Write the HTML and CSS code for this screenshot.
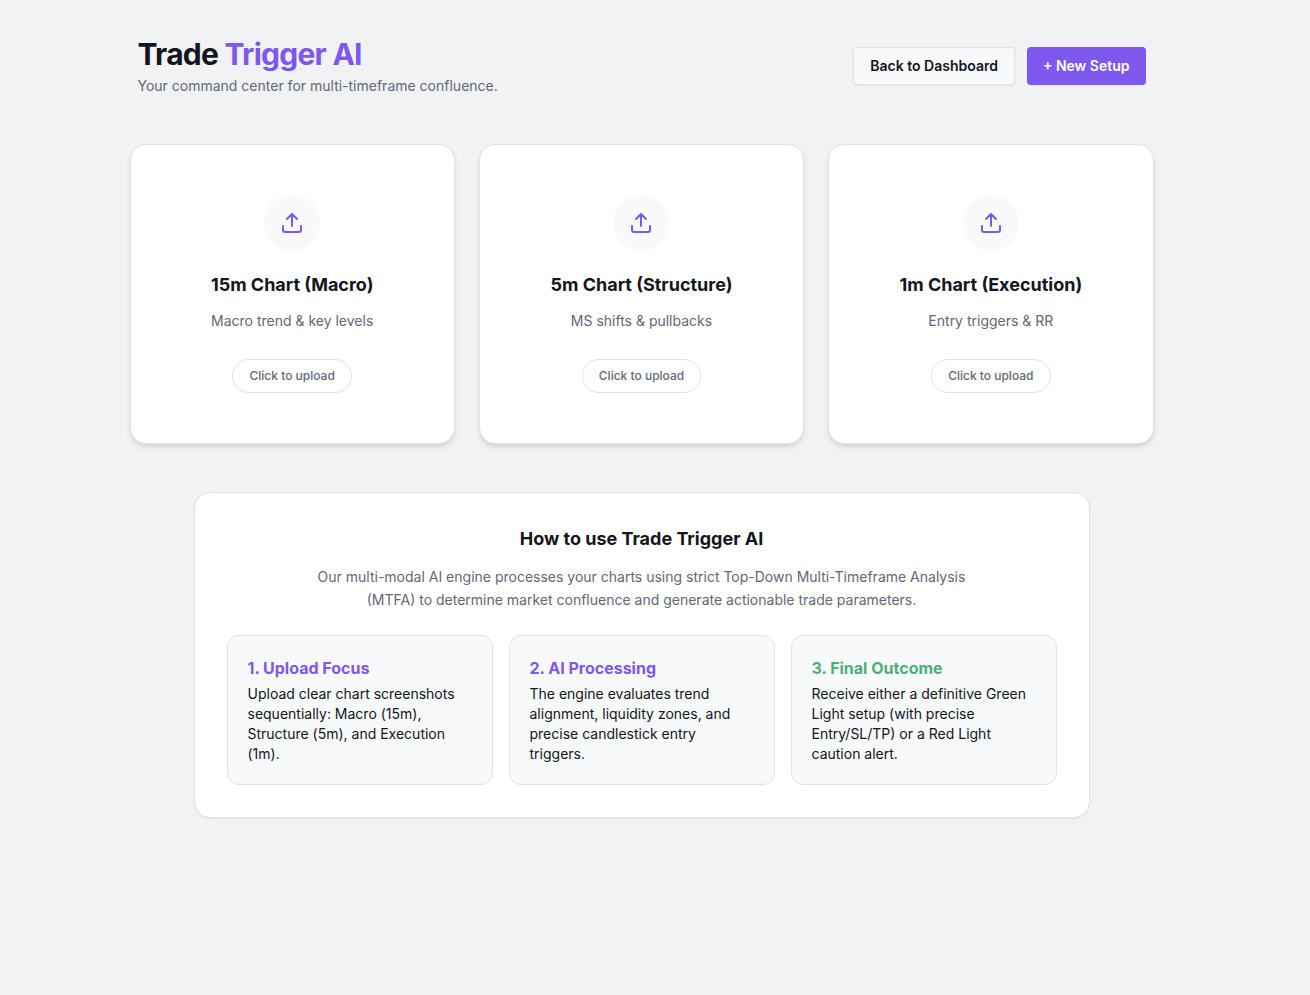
FILE: index.html
```
<!DOCTYPE html>
<html lang="en">
<head>
    <meta charset="UTF-8">
    <meta name="viewport" content="width=device-width, initial-scale=1.0">
    <title>Trade Trigger AI</title>
    <link rel="stylesheet" href="styles.css">
</head>
<body>
    <div class="container">
        <header class="page-header">
            <div>
                <h1>Trade <span>Trigger AI</span></h1>
                <p>Your command center for multi-timeframe confluence.</p>
            </div>
            <div class="actions">
                <button type="button" class="btn">Back to Dashboard</button>
                <button type="button" class="btn btn-primary">+ New Setup</button>
            </div>
        </header>

        <main>
            <section class="uploads">
                <div class="upload-card">
                    <div class="upload-icon">
                        <svg viewBox="0 0 24 24" aria-hidden="true"><path d="M21 15v4a2 2 0 0 1-2 2H5a2 2 0 0 1-2-2v-4M17 8l-5-5-5 5M12 3v12"/></svg>
                    </div>
                    <h2>15m Chart (Macro)</h2>
                    <p>Macro trend &amp; key levels</p>
                    <button type="button" class="upload-btn">Click to upload</button>
                </div>
                <div class="upload-card">
                    <div class="upload-icon">
                        <svg viewBox="0 0 24 24" aria-hidden="true"><path d="M21 15v4a2 2 0 0 1-2 2H5a2 2 0 0 1-2-2v-4M17 8l-5-5-5 5M12 3v12"/></svg>
                    </div>
                    <h2>5m Chart (Structure)</h2>
                    <p>MS shifts &amp; pullbacks</p>
                    <button type="button" class="upload-btn">Click to upload</button>
                </div>
                <div class="upload-card">
                    <div class="upload-icon">
                        <svg viewBox="0 0 24 24" aria-hidden="true"><path d="M21 15v4a2 2 0 0 1-2 2H5a2 2 0 0 1-2-2v-4M17 8l-5-5-5 5M12 3v12"/></svg>
                    </div>
                    <h2>1m Chart (Execution)</h2>
                    <p>Entry triggers &amp; RR</p>
                    <button type="button" class="upload-btn">Click to upload</button>
                </div>
            </section>

            <section class="guide">
                <h2>How to use Trade Trigger AI</h2>
                <p class="guide-intro">Our multi-modal AI engine processes your charts using strict Top-Down Multi-Timeframe Analysis (MTFA) to determine market confluence and generate actionable trade parameters.</p>
                <div class="steps">
                    <div class="step">
                        <h3>1. Upload Focus</h3>
                        <p>Upload clear chart screenshots sequentially: Macro (15m), Structure (5m), and Execution (1m).</p>
                    </div>
                    <div class="step">
                        <h3>2. AI Processing</h3>
                        <p>The engine evaluates trend alignment, liquidity zones, and precise candlestick entry triggers.</p>
                    </div>
                    <div class="step step-final">
                        <h3>3. Final Outcome</h3>
                        <p>Receive either a definitive Green Light setup (with precise Entry/SL/TP) or a Red Light caution alert.</p>
                    </div>
                </div>
            </section>
        </main>
    </div>
</body>
</html>
```
FILE: styles.css
```
* {
    box-sizing: border-box;
}
body {
    font-family: Inter, 'Liberation Sans', sans-serif;
    font-size: 14px;
    line-height: 20px;
    margin: 0;
    padding: 36px 27px 36px 0;
    background: #f1f2f4;
    color: #131520;
}
h1, h2, h3, p {
    margin: 0;
}
button {
    font-family: inherit;
    cursor: pointer;
}
.container {
    max-width: 1024px;
    margin: 0 auto;
}
.page-header {
    display: flex;
    flex-wrap: wrap;
    justify-content: space-between;
    align-items: center;
    gap: 16px;
    padding: 0 8px;
    margin-bottom: 48px;
}
.page-header h1 {
    font-size: 30px;
    line-height: 36px;
    font-weight: 700;
    letter-spacing: -0.025em;
    margin-bottom: 4px;
}
.page-header h1 span {
    color: #7e57ee;
}
.page-header p {
    color: #636776;
}
.actions {
    display: flex;
    gap: 12px;
}
.btn {
    padding: 8px 16px;
    border: 1px solid #e0e2e7;
    border-radius: 4px;
    background: #f8f9fb;
    color: #131520;
    font-size: 14px;
    line-height: 20px;
    font-weight: 600;
    box-shadow: 0 1px 2px rgba(0,0,0,0.05);
}
.btn-primary {
    padding: 9px 16px;
    border: none;
    background: #7e57ee;
    color: #fff;
}
.uploads {
    display: grid;
    grid-template-columns: repeat(3, 1fr);
    gap: 24px;
    margin-bottom: 48px;
}
.upload-card {
    display: flex;
    flex-direction: column;
    align-items: center;
    justify-content: center;
    min-height: 300px;
    padding: 32px;
    background: #fff;
    border: 1px solid #e0e2e7;
    border-radius: 16px;
    box-shadow: 0 4px 6px -1px rgba(0,0,0,0.1), 0 2px 4px -2px rgba(0,0,0,0.1);
    text-align: center;
}
.upload-icon {
    display: flex;
    align-items: center;
    justify-content: center;
    width: 56px;
    height: 56px;
    margin-bottom: 20px;
    border-radius: 50%;
    background: #f8f9fb;
}
.upload-icon svg {
    width: 24px;
    height: 24px;
    fill: none;
    stroke: #7e57ee;
    stroke-width: 2;
    stroke-linecap: round;
    stroke-linejoin: round;
}
.upload-card h2, .guide h2 {
    font-size: 18px;
    line-height: 28px;
    font-weight: 700;
    margin-bottom: 12px;
}
.upload-card p {
    color: #636776;
    margin-bottom: 28px;
}
.upload-btn {
    padding: 8px 16px;
    border: 1px solid #e0e2e7;
    border-radius: 17px;
    background: #fff;
    color: #636776;
    font-size: 12px;
    line-height: 16px;
    font-weight: 500;
}
.guide {
    max-width: 896px;
    margin: 0 auto;
    padding: 32px;
    background: #fff;
    border: 1px solid #e0e2e7;
    border-radius: 16px;
    box-shadow: 0 1px 2px rgba(0,0,0,0.05);
    text-align: center;
}
.guide-intro {
    max-width: 672px;
    margin: 0 auto 24px;
    line-height: 23px;
    color: #636776;
}
.steps {
    display: grid;
    grid-template-columns: repeat(3, 1fr);
    gap: 16px;
    text-align: left;
}
.step {
    padding: 20px;
    background: #f8f9fb;
    border: 1px solid #e0e2e7;
    border-radius: 12px;
}
.step h3 {
    font-size: 16px;
    line-height: 24px;
    font-weight: 700;
    color: #7e57ee;
    margin-bottom: 4px;
}
.step-final h3 {
    color: #4caf7a;
}
@media (max-width: 800px) {
    body {
        padding: 24px 16px;
    }
    .uploads, .steps {
        grid-template-columns: 1fr;
    }
}
```
